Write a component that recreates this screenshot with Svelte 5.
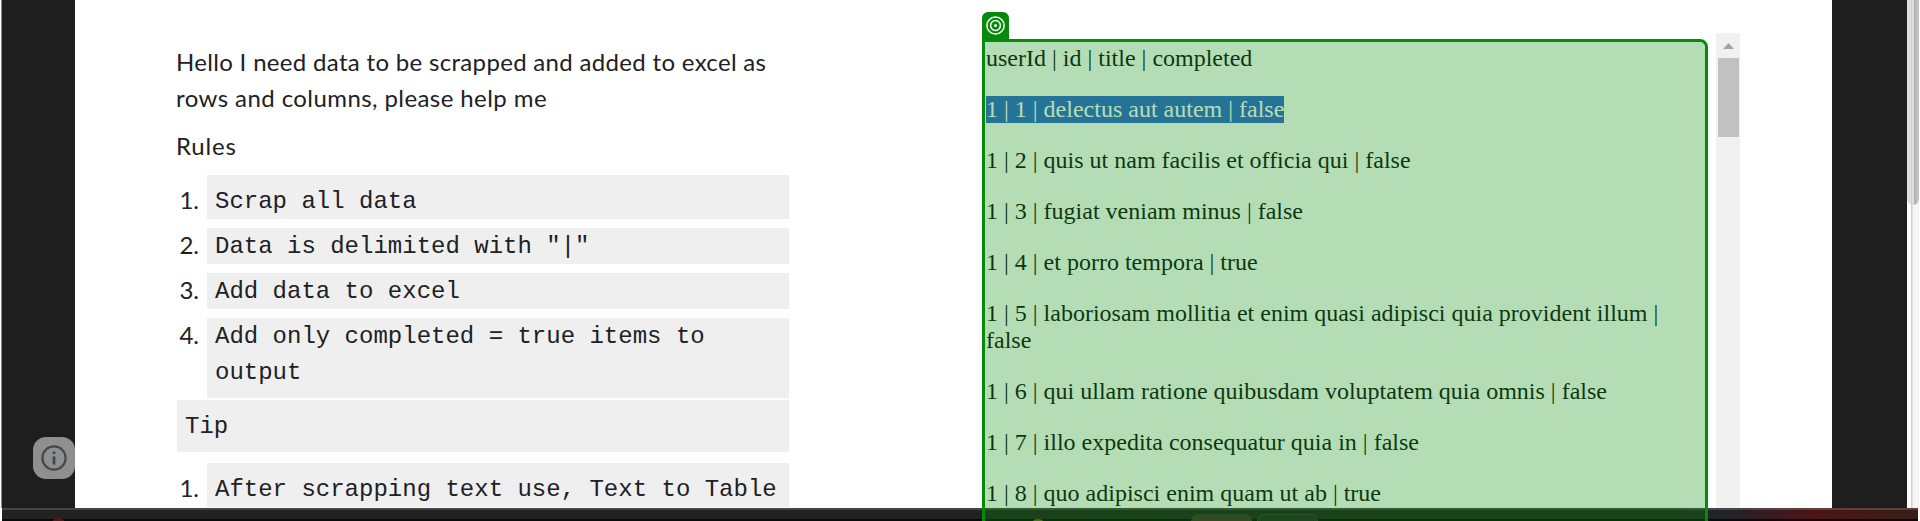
<script>
  const rules = ['Scrap all data', 'Data is delimited with "|"', 'Add data to excel', 'Add only completed = true items to output'];
  const rows = [
    'userId | id | title | completed',
    '1 | 1 | delectus aut autem | false',
    '1 | 2 | quis ut nam facilis et officia qui | false',
    '1 | 3 | fugiat veniam minus | false',
    '1 | 4 | et porro tempora | true',
    '1 | 5 | laboriosam mollitia et enim quasi adipisci quia provident illum | false',
    '1 | 6 | qui ullam ratione quibusdam voluptatem quia omnis | false',
    '1 | 7 | illo expedita consequatur quia in | false',
    '1 | 8 | quo adipisci enim quam ut ab | true'
  ];
</script>

<div class="screen">
  <main>
    <aside class="left">
      <button class="info" aria-label="Info">
        <svg width="26" height="26" viewBox="0 0 26 26" fill="none" stroke="#43484c" stroke-width="2.2">
          <circle cx="13" cy="13" r="11.6" />
          <path d="M13 11.5v8M13 6.5v2.6" stroke-width="2.8" />
        </svg>
      </button>
    </aside>
    <section class="notes">
      <p class="intro">Hello I need data to be scrapped and added to excel as<br /><span class="l2">rows and columns, please help me</span></p>
      <p class="rules">Rules</p>
      <ol>
        {#each rules as rule, i}
          <li><span class="num">{i + 1}.</span><code>{rule}</code></li>
        {/each}
      </ol>
      <code class="tip">Tip</code>
      <ol>
        <li><span class="num">1.</span><code>After scrapping text use, Text to Table</code></li>
      </ol>
    </section>
    <section class="data">
      {#each rows as row, i}
        <p><span class:selected={i === 1}>{row}</span></p>
      {/each}
    </section>
    <div class="inner-scroll">
      <svg width="11" height="6" viewBox="0 0 11 6"><path d="M5.5 0L11 6H0z" fill="#a3a3a3" /></svg>
      <div class="inner-thumb"></div>
    </div>
    <aside class="right"></aside>
    <div class="outer-scroll"><div class="outer-thumb"></div></div>
  </main>
  <footer>
    <i class="red"></i><i class="yellow"></i><i class="tab1"></i><i class="tab2"></i>
  </footer>
  <div class="overlay">
    <div class="badge">
      <svg width="19" height="19" viewBox="0 0 19 19" fill="none" stroke="#fff" stroke-width="1.5">
        <circle cx="9.5" cy="9.5" r="8.6" /><circle cx="9.5" cy="9.5" r="4.9" />
        <circle cx="9.5" cy="9.5" r="1.5" fill="#fff" stroke="none" />
      </svg>
    </div>
  </div>
</div>

<style>
  :global(body) { margin: 0; background: #fff; }
  * { box-sizing: border-box; }
  p, ol { margin: 0; padding: 0; }
  .screen { position: relative; width: 1920px; height: 521px; overflow: hidden; display: flex; flex-direction: column; }
  main { display: flex; height: 508px; overflow: hidden; }
  .left { width: 74px; flex: none; margin-left: 1px; background: #1e1e1e; border-left: 1px solid #8b908f; display: flex; flex-direction: column; justify-content: flex-end; align-items: flex-end; padding-bottom: 29px; }
  .info { width: 42px; height: 42px; border: 0; padding: 0; border-radius: 13px; background: #8f8f8f; display: grid; place-items: center; }
  .notes { width: 612px; flex: none; margin-left: 102px; padding-top: 44px; color: #202124; font: 24px/36px Lato, sans-serif; }
  .notes p { white-space: nowrap; margin-left: -1px; }
  .intro { letter-spacing: 0.32px; }
  .l2 { letter-spacing: 0.42px; }
  .notes .rules { margin-top: 12px; margin-bottom: 11px; letter-spacing: 0.8px; }
  li { display: flex; list-style: none; margin-bottom: 9px; }
  li:last-child { margin-bottom: 2px; }
  .num { width: 30px; height: 36px; margin-top: -1px; padding-right: 8px; text-align: right; flex: none; }
  code { flex: 1; display: block; background: #efefef; padding: 1px 8px 0; font: 24px/36px "Liberation Mono", monospace; height: 36px; }
  li:first-child code { padding-top: 9px; height: 44px; }
  li:first-child .num { margin-top: 7px; }
  li:last-child:not(:first-child) code { height: 80px; }
  .tip { height: 52px; padding-top: 9px; margin-bottom: 11px; }
  .data { width: 705px; flex: none; margin-left: 197px; padding-top: 45px; font: 24px/27px "Liberation Serif", serif; color: #111; }
  .data p { margin-bottom: 24px; }
  .selected { display: inline-block; vertical-align: top; height: 27px; background: #3367d1; color: #fff; }
  .inner-scroll { width: 24px; flex: none; margin: 33px 0 0 25px; background: #f1f1f1; display: flex; flex-direction: column; padding: 10px 1px 0 2px; }
  .inner-scroll svg { margin-left: 5px; }
  .inner-thumb { height: 79px; margin-top: 9px; background: #c1c1c1; }
  .right { width: 75px; flex: none; margin-left: 92px; background: #1e1e1e; }
  .outer-scroll { width: 12px; flex: none; background: linear-gradient(90deg, #fff 4px, #d0d0d0 4px 5px, #f5f5f5 6px); }
  .outer-thumb { height: 205px; border-radius: 0 0 6px 6px; background: linear-gradient(90deg, #dedede 4px, #d0d0d0 4px 5px, #dedede 5px 7px, #b0b0b0 7px, #c8c8c8 12px); }
  footer { position: relative; height: 13px; flex: none; margin: 0 2px; overflow: hidden; background: linear-gradient(180deg, #ffffff28 2px, transparent 2px 11px, #000000b8 11px), linear-gradient(90deg, #222 0 1680px, #20232b 1720px, #4b1517 1810px, #3a1d19 1900px); }
  footer i { position: absolute; }
  .red { left: 49px; top: 10px; width: 15px; height: 15px; border-radius: 50%; background: #5c1713; }
  .yellow { left: 1028px; top: 11px; width: 16px; height: 16px; border-radius: 50%; background: #756800; }
  .tab1 { left: 1189px; top: 6px; width: 61px; height: 20px; border-radius: 7px; background: #46302a; }
  .tab2 { left: 1255px; top: 6px; width: 61px; height: 20px; border-radius: 7px; border: 1px solid #3c3c3c; background: #282828; }
  .overlay { position: absolute; left: 982px; top: 39px; width: 726px; height: 500px; border: 3px solid #068a0c; border-radius: 0 8px 0 0; background: rgba(5, 143, 12, 0.3); background-clip: padding-box; }
  .badge { position: absolute; left: -3px; top: -30px; width: 27px; height: 27px; border-radius: 6px 6px 0 0; background: #068a0c; display: grid; place-items: center; }
</style>
